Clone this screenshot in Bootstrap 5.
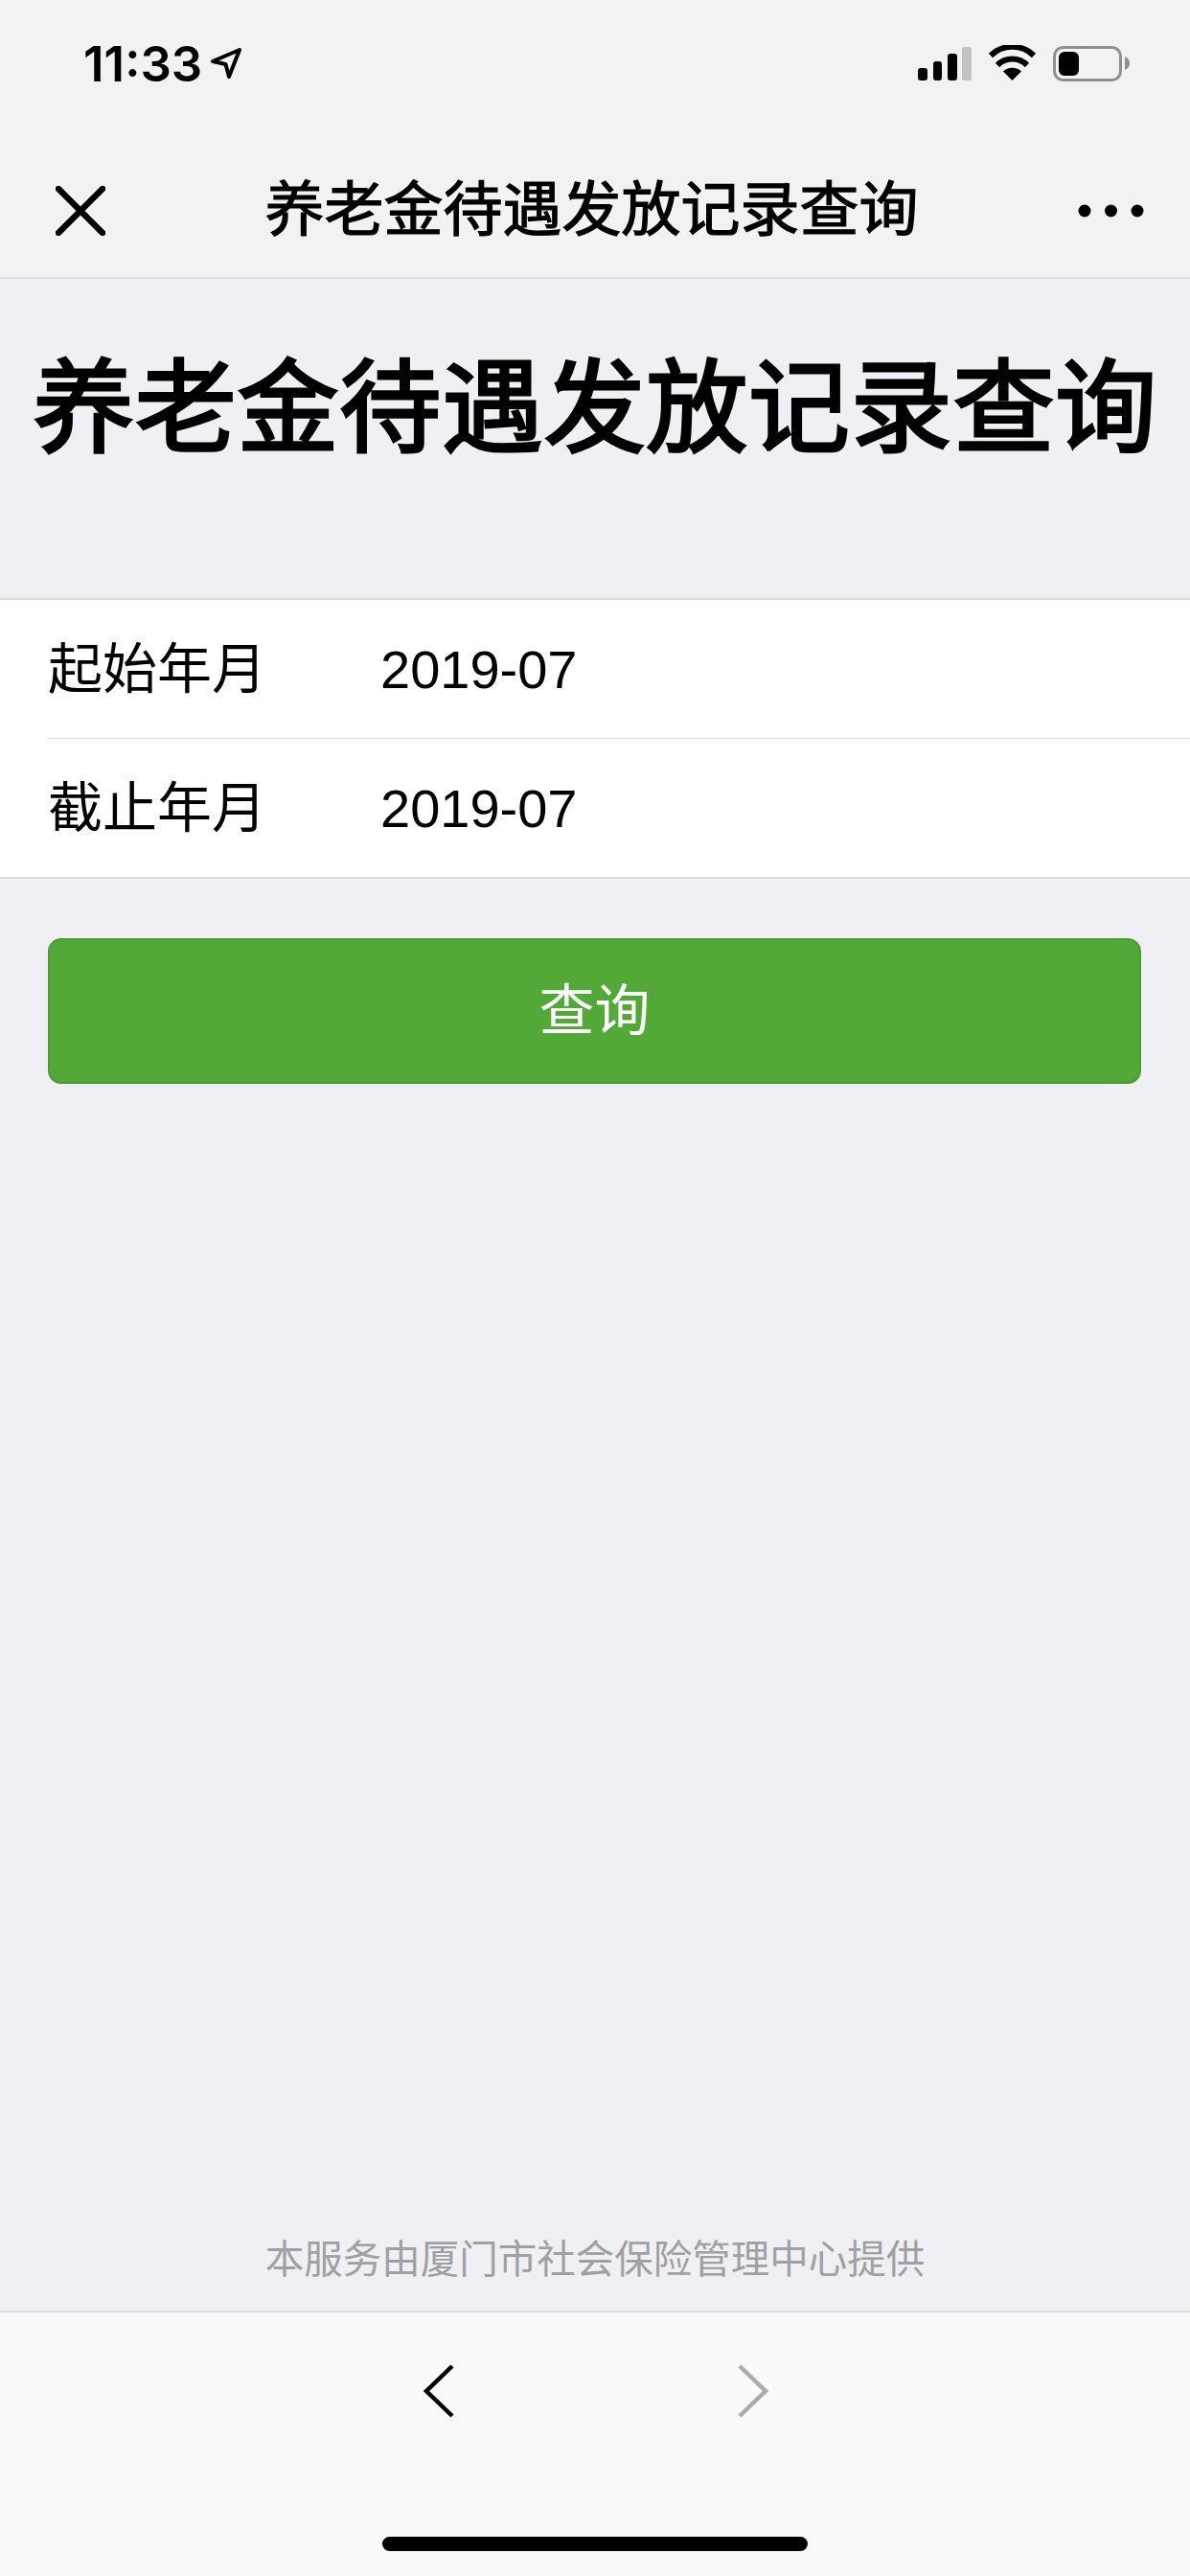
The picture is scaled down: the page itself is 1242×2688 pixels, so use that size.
<!DOCTYPE html>
<html lang="zh-CN">
<head>
    <meta charset="UTF-8">
    <meta name="viewport" content="width=device-width, initial-scale=1.0">
    <title>养老金待遇发放记录查询</title>
    <link href="https://cdn.jsdelivr.net/npm/bootstrap@5.3.0/dist/css/bootstrap.min.css" rel="stylesheet">
    <style>
        body {
            background-color: #efeff4;
            font-family: "Liberation Sans", "Noto Sans CJK SC", sans-serif;
            color: #000;
        }
        .phone-page {
            height: 2688px;
            overflow: hidden;
        }
        .top-area {
            background-color: #f2f2f2;
            border-bottom: 2px solid #dcdce0;
        }
        .status-row {
            height: 146px;
            padding: 0 63px 14px 87px;
        }
        .status-time {
            font-family: Inter, Roboto, sans-serif;
            font-size: 51px;
            font-weight: 600;
            line-height: 1;
        }
        .nav-row {
            height: 143px;
            padding: 4px 48px 0 58px;
        }
        .nav-title {
            font-size: 62px;
            font-weight: 400;
            -webkit-text-stroke: 1.2px #000;
            line-height: 1;
        }
        .big-title {
            font-size: 106px;
            font-weight: 400;
            -webkit-text-stroke: 3px #000;
            letter-spacing: 0.7px;
            line-height: 140px;
            height: 333px;
            padding-top: 65px;
            margin: 0;
            text-align: center;
            white-space: nowrap;
        }
        .date-list {
            border-top: 2px solid #dcdce0;
            border-bottom: 2px solid #dcdce0;
            background-color: #fff;
            border-radius: 0;
            padding-left: 50px;
        }
        .date-item {
            height: 144px;
            font-size: 56px;
            color: #000;
            padding: 2px 0 0;
            border-color: #dcdce0;
            border-width: 0 0 2px 0;
            background: transparent;
        }
        .date-item:first-child {
            height: 145px;
        }
        .date-item:last-child {
            border-bottom: 0;
        }
        .date-label {
            width: 347px;
            font-size: 57px;
        }
        .query-wrap {
            padding: 62px 51px 0 50px;
        }
        .query-btn {
            height: 152px;
            font-size: 58px;
            line-height: 1;
            color: #fff;
            background-color: #52a938;
            border: 2px solid #4a9c32;
            border-radius: 14px;
        }
        .provider-note {
            font-size: 40.5px;
            line-height: 1;
            color: #a0a0a3;
            padding-bottom: 33px;
        }
        .bottom-bar {
            height: 277px;
            background-color: #fafafa;
            border-top: 2px solid #dcdce0;
            padding: 54px 0 0 2px;
            gap: 296px;
        }
        .home-line {
            width: 444px;
            height: 15px;
            left: 399px;
            bottom: 26px;
            background-color: #000;
            border-radius: 8px;
        }
    </style>
</head>

<body>
    <div class="phone-page d-flex flex-column position-relative">
        <div class="top-area">
            <div class="status-row d-flex align-items-center justify-content-between">
                <div class="d-flex align-items-center gap-2">
                    <span class="status-time">11:33</span>
                    <svg width="34" height="34" viewBox="0 0 34 34">
                        <path d="M3 15 L31 3 L20 31 L16.5 18 Z" fill="none" stroke="#000" stroke-width="4" stroke-linejoin="round"/>
                    </svg>
                </div>
                <svg width="221" height="38" viewBox="958 47 221 38">
                    <rect x="958" y="71" width="10" height="13" rx="3"/>
                    <rect x="974" y="64" width="9" height="20" rx="3"/>
                    <rect x="989" y="56" width="10" height="28" rx="3"/>
                    <rect x="1004" y="49" width="10" height="35" rx="2" fill="#c2c2c2"/>
                    <path d="M1056.5 84 L1047 74.5 A14 14 0 0 1 1066 74.5 Z"/>
                    <path d="M1041 68 A22 22 0 0 1 1072 68" fill="none" stroke="#000" stroke-width="6" stroke-linecap="butt"/>
                    <path d="M1034 58 A32 32 0 0 1 1079 58" fill="none" stroke="#000" stroke-width="6" stroke-linecap="butt"/>
                    <rect x="1100.5" y="49.5" width="69" height="34" rx="9" fill="none" stroke="#8f8f8f" stroke-width="3"/>
                    <rect x="1105" y="54" width="21" height="25" rx="6"/>
                    <path d="M1174 59 Q1179 61 1179 66 Q1179 71 1174 73 Z" fill="#8f8f8f"/>
                </svg>
            </div>
            <div class="nav-row d-flex align-items-center justify-content-between">
                <svg width="52" height="52" viewBox="0 0 52 52">
                    <path d="M3 3 L49 49 M49 3 L3 49" stroke="#000" stroke-width="6.5" stroke-linecap="round"/>
                </svg>
                <span class="nav-title">养老金待遇发放记录查询</span>
                <svg width="69" height="14" viewBox="0 0 69 14">
                    <circle cx="7" cy="7" r="6.5"/>
                    <circle cx="34.5" cy="7" r="6.5"/>
                    <circle cx="62" cy="7" r="6.5"/>
                </svg>
            </div>
        </div>

        <h1 class="big-title">养老金待遇发放记录查询</h1>

        <div class="list-group list-group-flush date-list">
            <div class="list-group-item date-item d-flex align-items-center">
                <span class="date-label">起始年月</span>
                <span>2019-07</span>
            </div>
            <div class="list-group-item date-item d-flex align-items-center">
                <span class="date-label">截止年月</span>
                <span>2019-07</span>
            </div>
        </div>

        <div class="query-wrap">
            <button type="button" class="btn query-btn w-100">查询</button>
        </div>

        <div class="provider-note flex-grow-1 d-flex align-items-end justify-content-center">本服务由厦门市社会保险管理中心提供</div>

        <div class="bottom-bar d-flex justify-content-center align-items-start">
            <svg width="32" height="56" viewBox="0 0 32 56">
                <path d="M30 2 L3 28 L30 54" fill="none" stroke="#000" stroke-width="4.5"/>
            </svg>
            <svg width="32" height="56" viewBox="0 0 32 56">
                <path d="M2 2 L29 28 L2 54" fill="none" stroke="#ababab" stroke-width="4.5"/>
            </svg>
        </div>
        <div class="home-line position-absolute"></div>
    </div>

    <script src="https://cdn.jsdelivr.net/npm/bootstrap@5.3.0/dist/js/bootstrap.bundle.min.js"></script>
</body>

</html>
